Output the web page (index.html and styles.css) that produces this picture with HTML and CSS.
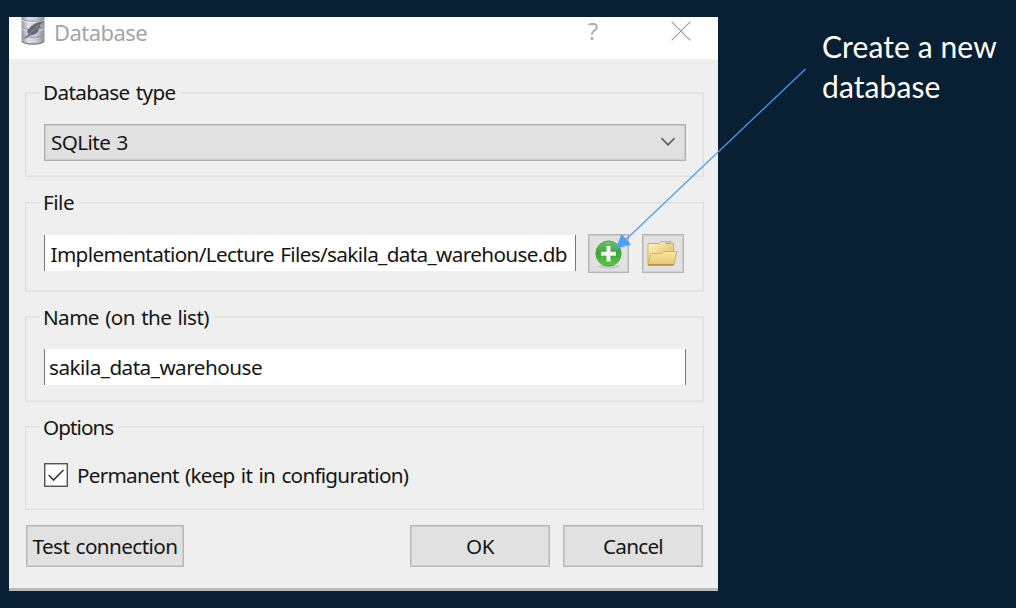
FILE: index.html
```
<!DOCTYPE html>
<html lang="en">
<head>
<meta charset="utf-8">
<title>Database</title>
<link rel="stylesheet" href="styles.css">
</head>
<body>
<main class="slide">
  <div class="dialog">
    <header class="titlebar">
      <svg class="db-icon" width="24" height="30" viewBox="0 0 24 30">
        <defs>
          <linearGradient id="metal" x1="0" x2="1"><stop offset="0" stop-color="#9297a3"/><stop offset=".3" stop-color="#dfe1ea"/><stop offset=".65" stop-color="#c5c9d6"/><stop offset="1" stop-color="#8b8f9c"/></linearGradient>
        </defs>
        <path d="M.5 0H23.500V24C22 28.500 2 28.500 .5 24Z" fill="url(#metal)"/>
        <path d="M1 24.300C3 28 21 28 23 24.300" fill="none" stroke="#777a86" stroke-width="1.300"/>
        <path d="M1 2C4 5 20 5 23 2M1 10.500C4 13.500 20 13.500 23 10.500M1 18C4 21 20 21 23 18" fill="none" stroke="#8e929e"/>
        <path d="M1 3.200C4 6.200 20 6.200 23 3.200M1 11.700C4 14.700 20 14.700 23 11.700" fill="none" stroke="#eff0f5" stroke-width=".8"/>
        <path d="M23 4C15 5 8 9 6 15L7.500 17L2 23L9 18.500C15 18 19 14 17 12L20 10L18.500 8.500Z" fill="#666971"/>
        <path d="M7.500 17.500L18 8" stroke="#9699a4" stroke-width=".8" fill="none"/>
      </svg>
      <span class="title">Database</span>
      <span class="help">?</span>
      <svg class="close" width="20" height="20" viewBox="0 0 20 20"><path d="M.6 .6L19.4 19.4M19.4 .6L.6 19.4" stroke="#999" stroke-width="1.1"/></svg>
    </header>
    <div class="body">
      <section class="group type">
        <span class="legend"><span class="t-type">Database type</span></span>
        <div class="select"><span class="t-sqlite">SQLite 3</span>
          <svg width="16" height="10" viewBox="0 0 16 10"><path d="M1.5 1.3L8 7.8L14.5 1.3" fill="none" stroke="#555" stroke-width="1.6"/></svg>
        </div>
      </section>
      <section class="group file">
        <span class="legend"><span class="t-file">File</span></span>
        <div class="file-row">
          <div class="input path"><span class="t-path">Implementation/Lecture Files/sakila_data_warehouse.db</span></div>
          <div class="tool add">
            <svg width="32" height="32" viewBox="0 0 32 32">
              <defs><linearGradient id="green" x1="0" x2="0" y1="0" y2="1"><stop offset="0" stop-color="#72c472"/><stop offset=".45" stop-color="#3ca33c"/><stop offset="1" stop-color="#5dcc3b"/></linearGradient></defs>
              <ellipse cx="15.500" cy="28.500" rx="11" ry="2" fill="#cacaca"/>
              <circle cx="15.500" cy="15.500" r="12.600" fill="url(#green)" stroke="#4da54b"/>
              <path d="M15.500 8V23.500M8 15.700H23" stroke="#f4f4f1" stroke-width="4"/>
            </svg>
          </div>
          <div class="tool open">
            <svg width="34" height="32" viewBox="0 0 34 32">
              <defs><linearGradient id="folder" x1="0" x2="1" y1="0" y2="1"><stop offset="0" stop-color="#fff3c7"/><stop offset="1" stop-color="#dfb64e"/></linearGradient>
              <linearGradient id="flap" x1="0" x2="0" y1="0" y2="1"><stop offset="0" stop-color="#f9e6a6"/><stop offset="1" stop-color="#e8c770"/></linearGradient></defs>
              <path d="M2 26V5.500H13L15 3.500H25V5.500H27.500V26Z" fill="url(#folder)" stroke="#d0ae65"/>
              <path d="M16 5H24" stroke="#efe5c9" stroke-width="2"/><path d="M19.500 5.300H24" stroke="#55b5cd" stroke-width="1.300"/>
              <path d="M2 26.500L5 15.500H15.500L17.500 13.500H31L28 26.500Z" fill="url(#flap)" stroke="#d3b061"/>
              <path d="M2 27H27.500" stroke="#ad8a48" stroke-width="1.500"/>
            </svg>
          </div>
        </div>
      </section>
      <section class="group name">
        <span class="legend"><span class="t-name">Name (on the list)</span></span>
        <div class="input db-name"><span class="t-sakila">sakila_data_warehouse</span></div>
      </section>
      <section class="group options">
        <span class="legend"><span class="t-options">Options</span></span>
        <div class="check-row">
          <svg class="check" width="24" height="24" viewBox="0 0 24 24"><rect x=".75" y=".75" width="22.500" height="22.500" fill="#fff" stroke="#444" stroke-width="1.300"/><path d="M4.700 12L9.500 17L19.500 7" fill="none" stroke="#3c3c3c" stroke-width="1.700"/></svg>
          <span class="t-perm">Permanent (keep it in configuration)</span>
        </div>
      </section>
      <footer class="actions">
        <div class="button test"><span class="t-test">Test connection</span></div>
        <div class="button ok"><span class="t-ok">OK</span></div>
        <div class="button cancel"><span class="t-cancel">Cancel</span></div>
      </footer>
    </div>
  </div>
  <p class="note">Create a new<br>database</p>
  <svg class="arrow" width="1016" height="608" viewBox="0 0 1016 608"><path d="M805.500 69L626 239.500" stroke="#4a9df4" stroke-width="1.200"/><path d="M615.500 249L621.500 234L631 244.500Z" fill="#4ea0f8"/></svg>
</main>
</body>
</html>
```
FILE: styles.css
```
* { box-sizing: border-box; }
body { margin: 0; background: #091f33; }
.slide {
  position: relative;
  display: flex;
  width: 1016px;
  height: 608px;
  padding: 17px 0 0 9px;
  overflow: hidden;
  background: #091f33;
  font-family: "Noto Sans", "Open Sans", sans-serif;
  font-size: 20.7px;
  line-height: 26px;
  color: #151515;
  white-space: nowrap;
}
.dialog {
  width: 709px;
  height: 574px;
  background: #efefef;
  border-bottom: 3px solid #b9bbba;
}
.titlebar {
  display: flex;
  height: 42px;
  padding: 0 27px 0 12px;
  background: #fff;
  color: #a5a5a5;
}
.title { margin: 2px 0 0 9px; font-size: 22px; letter-spacing: -.55px; }
.help { margin: 1px 73px 0 auto; font-family: "Open Sans", sans-serif; font-size: 24px; font-weight: 400; color: #aaa; }
.close { margin-top: 4px; }
.body { padding: 33px 14px 0 16px; }
.group {
  height: 85px;
  padding: 1px 18px 1px 20px;
  border: 1px solid #dfdfdf;
  box-shadow: inset 0 0 0 1px #e8e8e8;
}
.legend {
  display: block;
  width: max-content;
  height: 26px;
  margin: -14px 0 0 -6px;
  padding: 0 5px 0 3px;
  background: #efefef;
  line-height: 25px;
}
.select {
  display: flex;
  align-items: center;
  justify-content: space-between;
  width: 642px;
  height: 37px;
  margin: 18px 0 0 -2px;
  padding: 0 9px 2px 6px;
  border: 1px solid #b0b0b0;
  box-shadow: inset 0 0 0 1px #cdcdcd;
  background: #e1e1e1;
}
.file { height: 90px; margin-top: 25px; }
.file-row { display: flex; margin: 19px 0 0 -2px; }
.input {
  height: 36px;
  padding: 6px 0 0 5.5px;
  border-left: 1px solid #777;
  border-right: 1px solid #777;
  background: #fff;
}
.path { width: 532px; overflow: hidden; }
.tool {
  display: flex;
  align-items: center;
  justify-content: center;
  width: 41px;
  height: 39px;
  margin-top: -1px;
  border: 1px solid #b4b4b4;
  box-shadow: inset 0 0 0 1px #cdcdcd;
  background: #e1e1e1;
}
.add { margin-left: 12px; }
.open { width: 42px; margin-left: 13px; }
.name { margin-top: 24px; height: 86px; }
.name .legend, .options .legend { line-height: 27px; }
.db-name { width: 642px; margin: 19px 0 0 -2px; padding: 5px 0 0 4px; }
.options { margin-top: 24px; height: 84px; }
.check-row { display: flex; align-items: center; gap: 9px; margin: 22px 0 0 -2px; height: 26px; }
.actions { display: flex; margin: 15px 0 0 1px; }
.button {
  display: flex;
  align-items: center;
  justify-content: center;
  height: 42px;
  border: 1px solid #b8b8b8;
  box-shadow: inset 0 0 0 1px #cbcbcb;
  background: #e1e1e1;
}
.test { width: 158px; }
.ok { width: 140px; margin-left: 226px; }
.cancel { width: 140px; margin-left: 13px; }
.t-type { letter-spacing: -.65px; word-spacing: 1.5px; }
.t-sqlite { letter-spacing: -.6px; word-spacing: 1.5px; }
.t-file { letter-spacing: -.5px; }
.t-path { letter-spacing: -.63px; word-spacing: 1.5px; }
.t-name { letter-spacing: -.6px; word-spacing: 1.5px; }
.t-sakila { letter-spacing: -.52px; }
.t-options { letter-spacing: -.95px; }
.t-perm { letter-spacing: -.75px; word-spacing: 1.7px; }
.t-test { letter-spacing: -.58px; word-spacing: 1.5px; }
.t-ok { letter-spacing: -.4px; }
.t-cancel { letter-spacing: -.75px; }
.note {
  margin: 9px 0 0 104px;
  font-family: Lato, sans-serif;
  font-size: 30px;
  line-height: 40px;
  letter-spacing: .1px;
  color: #fff;
}
.arrow { position: absolute; left: 0; top: 0; }
```
